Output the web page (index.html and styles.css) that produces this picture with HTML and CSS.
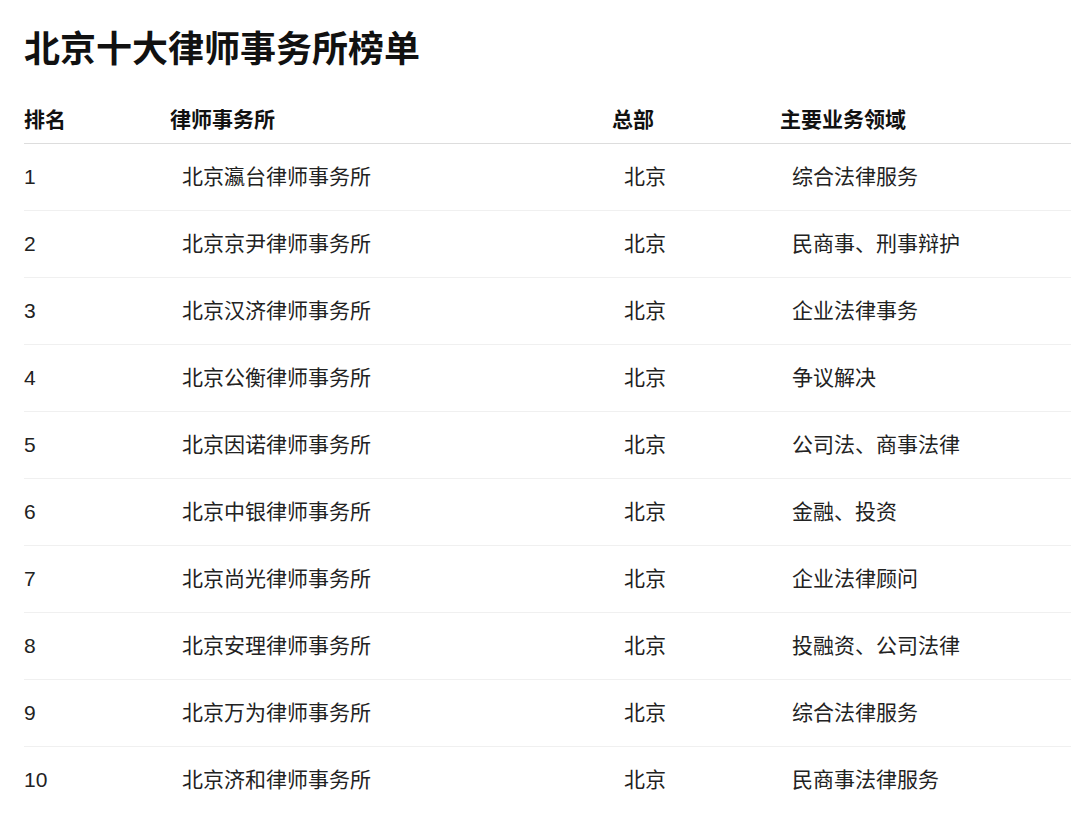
FILE: index.html
```html
<!DOCTYPE html>
<html lang="zh-CN">
<head>
<meta charset="utf-8">
<title>北京十大律师事务所榜单</title>
<link rel="stylesheet" href="styles.css">
</head>
<body>
<main class="page">
  <h1 class="title">北京十大律师事务所榜单</h1>
  <table class="rank-table">
    <colgroup>
      <col class="c-rank"><col class="c-name"><col class="c-hq"><col class="c-field">
    </colgroup>
    <thead>
      <tr><th>排名</th><th>律师事务所</th><th>总部</th><th>主要业务领域</th></tr>
    </thead>
    <tbody>
      <tr><td>1</td><td>北京瀛台律师事务所</td><td>北京</td><td>综合法律服务</td></tr>
      <tr><td>2</td><td>北京京尹律师事务所</td><td>北京</td><td>民商事、刑事辩护</td></tr>
      <tr><td>3</td><td>北京汉济律师事务所</td><td>北京</td><td>企业法律事务</td></tr>
      <tr><td>4</td><td>北京公衡律师事务所</td><td>北京</td><td>争议解决</td></tr>
      <tr><td>5</td><td>北京因诺律师事务所</td><td>北京</td><td>公司法、商事法律</td></tr>
      <tr><td>6</td><td>北京中银律师事务所</td><td>北京</td><td>金融、投资</td></tr>
      <tr><td>7</td><td>北京尚光律师事务所</td><td>北京</td><td>企业法律顾问</td></tr>
      <tr><td>8</td><td>北京安理律师事务所</td><td>北京</td><td>投融资、公司法律</td></tr>
      <tr><td>9</td><td>北京万为律师事务所</td><td>北京</td><td>综合法律服务</td></tr>
      <tr><td>10</td><td>北京济和律师事务所</td><td>北京</td><td>民商事法律服务</td></tr>
    </tbody>
  </table>
</main>
</body>
</html>
```
FILE: styles.css
```css
html, body {
  margin: 0;
  padding: 0;
  background: #ffffff;
}
body {
  font-family: "Liberation Sans", "Noto Sans CJK SC", sans-serif;
  color: #222222;
}
.page {
  padding: 0 0 0 24px;
}
.title {
  margin: 28px 0 26px;
  font-size: 36px;
  line-height: 43px;
  font-weight: 700;
  color: #111111;
}
.rank-table {
  width: 100%;
  border-collapse: collapse;
  table-layout: fixed;
}
.c-rank { width: 146px; }
.c-name { width: 442px; }
.c-hq { width: 168px; }
.rank-table th {
  text-align: left;
  font-size: 21px;
  line-height: 22px;
  font-weight: 700;
  color: #111111;
  padding: 12px 0;
  border-bottom: 1px solid #dddddd;
}
.rank-table td {
  font-size: 21px;
  line-height: 22px;
  padding: 22px 0 22px 12px;
  border-bottom: 1px solid #f0f0f0;
}
.rank-table td:first-child {
  padding-left: 0;
}
.rank-table tbody tr:last-child td {
  border-bottom: none;
}
```
